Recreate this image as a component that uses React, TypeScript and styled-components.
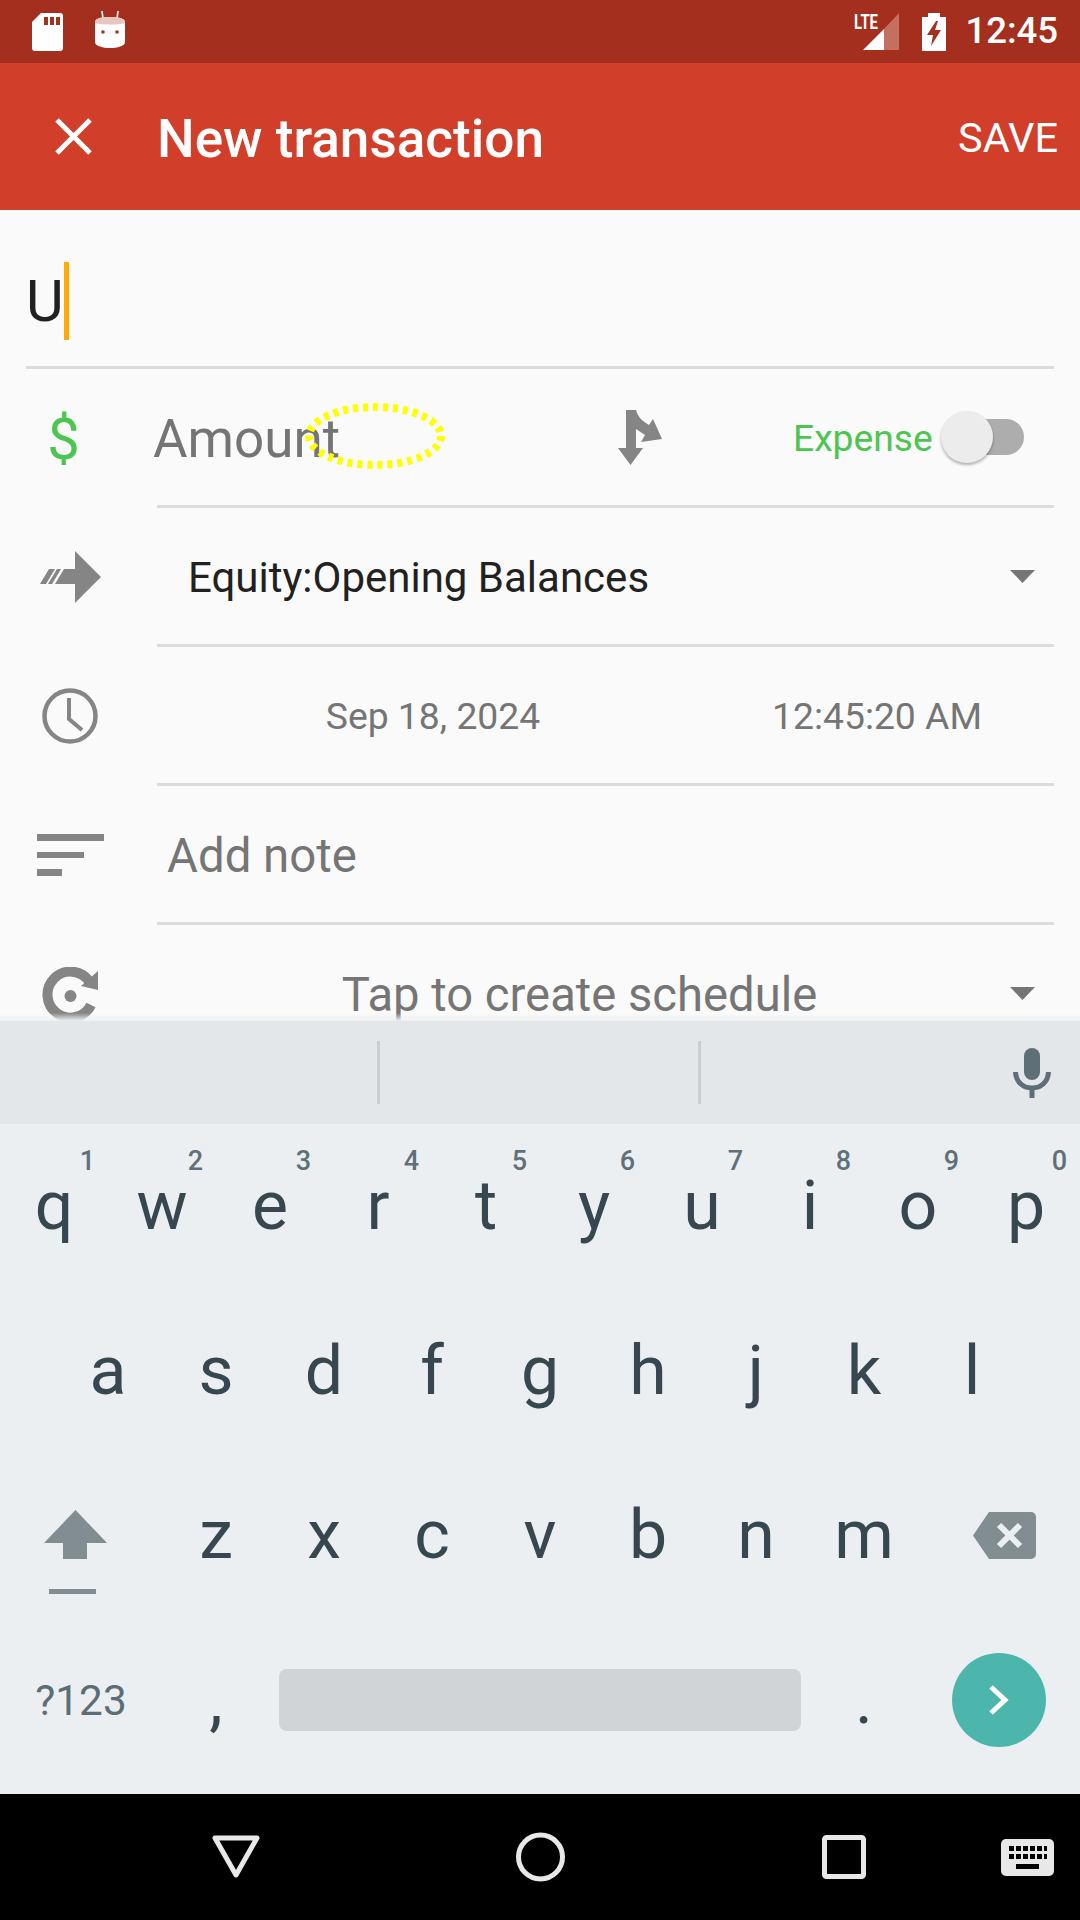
import React from "react";
import styled, { createGlobalStyle } from "styled-components";

const Global = createGlobalStyle`
  html, body { margin: 0; padding: 0; background: #000; }
  body { font-family: Roboto, "Liberation Sans", sans-serif; }
  * { box-sizing: border-box; }
`;

const Page = styled.div`
  position: relative;
  width: 1080px;
  height: 1920px;
  display: flex;
  flex-direction: column;
  overflow: hidden;
  background: #fafafa;
`;

const StatusBar = styled.div`
  height: 63px;
  flex: none;
  background: #a52f1e;
  display: flex;
  align-items: center;
  padding: 0 22px 0 32px;
  color: #fff;
`;
const StatusLeft = styled.div`
  display: flex;
  align-items: center;
  gap: 32px;
  flex: 1;
`;
const StatusRight = styled.div`
  display: flex;
  align-items: center;
`;
const BugIcon = styled.svg`
  margin-bottom: 5px;
`;
const SignalIcon = styled.svg`
  margin-right: 23px;
  margin-top: -10px;
`;
const BatteryIcon = styled.svg`
  margin-right: 19px;
`;
const Clock = styled.span`
  font-size: 36.5px;
  font-weight: 500;
  line-height: 1;
`;

const AppBar = styled.div`
  height: 147px;
  flex: none;
  background: #d13e29;
  display: flex;
  align-items: center;
  color: #fff;
  padding-right: 22px;
`;
const CloseSlot = styled.div`
  width: 157px;
  flex: none;
  padding-left: 55px;
  display: flex;
`;
const Title = styled.div`
  flex: 1;
  font-size: 53.1px;
  font-weight: 500;
  margin-top: 4px;
`;
const Save = styled.div`
  font-size: 41.5px;
  margin-top: 2px;
`;

const Form = styled.div`
  position: relative;
  height: 811px;
  flex: none;
  overflow: hidden;
  background: #fafafa;
`;
const FormShade = styled.div`
  position: absolute;
  left: 0;
  right: 0;
  bottom: 0;
  height: 8px;
  background: linear-gradient(to bottom, rgba(235, 237, 238, 0), #f0f1f2);
`;
const TitleField = styled.div`
  height: 159px;
  margin: 0 26px;
  padding-top: 26px;
  border-bottom: 3px solid #dcdcdc;
  display: flex;
  align-items: center;
  font-size: 58px;
  color: #212121;
`;
const Caret = styled.span`
  width: 5px;
  height: 78px;
  background: #ffab00;
`;

const Row = styled.div`
  height: 139px;
  display: flex;
`;
const IconSlot = styled.div<{ $shift?: number; $lift?: number }>`
  width: 140px;
  margin-right: 17px;
  flex: none;
  display: flex;
  align-items: center;
  justify-content: center;
  padding-right: ${(p) => p.$shift ?? 0}px;
  padding-bottom: ${(p) => p.$lift ?? 0}px;
`;
const Dollar = styled.span`
  font-size: 58px;
  color: #4cc552;
  line-height: 1;
`;
const Body = styled.div<{ $inset?: number }>`
  flex: 1;
  margin-right: 26px;
  border-bottom: 3px solid #dcdcdc;
  display: flex;
  align-items: center;
  padding-left: ${(p) => p.$inset ?? 0}px;
  min-width: 0;
`;
const BodyGrid = styled(Body)`
  display: grid;
  grid-template-columns: 552px 336px;
  justify-items: center;
`;
const Placeholder = styled.span<{ $size: number; $drop?: number }>`
  font-size: ${(p) => p.$size}px;
  color: #757575;
  margin-top: ${(p) => p.$drop ?? 3}px;
`;
const AmountText = styled(Placeholder)`
  width: 465px;
  margin-left: -4px;
  flex: none;
`;
const ExpenseLabel = styled.span`
  margin-left: 131px;
  font-size: 37.2px;
  color: #4cc552;
  margin-top: 2px;
`;
const Toggle = styled.div`
  position: relative;
  width: 83px;
  height: 52px;
  margin-left: 8px;
  display: flex;
  align-items: center;
  justify-content: flex-end;
`;
const Track = styled.div`
  width: 77px;
  height: 36px;
  border-radius: 18px;
  background: #adadad;
`;
const Thumb = styled.div`
  position: absolute;
  left: 0;
  top: 0;
  width: 52px;
  height: 52px;
  border-radius: 50%;
  background: #ececec;
  box-shadow: 0 2px 3px rgba(0, 0, 0, 0.3);
`;
const AccountText = styled.span`
  flex: 1;
  font-size: 42px;
  color: #212121;
  margin-top: 2px;
`;
const ScheduleText = styled(Placeholder)`
  width: 845px;
  flex: none;
  text-align: center;
`;
const Dropdown = styled.svg`
  flex: none;
  margin-left: auto;
  margin-right: 19px;
`;
const Highlight = styled.svg`
  position: absolute;
  left: 303px;
  top: 401px;
`;

const Keyboard = styled.div`
  flex: 1;
  display: flex;
  flex-direction: column;
  background: #eceff2;
`;
const Suggestions = styled.div`
  height: 103px;
  flex: none;
  background: #e3e7ea;
  display: grid;
  grid-template-columns: 380px 321px 1fr;
  align-items: center;
`;
const Suggestion = styled.div<{ $line?: boolean }>`
  height: 63px;
  display: flex;
  align-items: center;
  justify-content: flex-end;
  border-right: ${(p) => (p.$line ? "3px solid #c9ced2" : "none")};
  padding-right: ${(p) => (p.$line ? 0 : 29)}px;
`;
const KeyRows = styled.div`
  flex: 1;
  display: grid;
  grid-auto-rows: 164.5px;
  padding-bottom: 12px;
`;
const KeyRow = styled.div<{ $pad?: number }>`
  display: flex;
  align-items: center;
  padding-left: ${(p) => p.$pad ?? 0}px;
`;
const Key = styled.div`
  position: relative;
  width: 108px;
  height: 100%;
  flex: none;
  display: flex;
  align-items: center;
  justify-content: center;
  font-size: 68px;
  color: #37474f;
`;
const Hint = styled.span`
  position: absolute;
  top: 21px;
  right: 13px;
  font-size: 27px;
  font-weight: 500;
  line-height: 32px;
  color: #607079;
`;
const WideKey = styled.div`
  width: 162px;
  flex: none;
  display: flex;
  align-items: center;
  justify-content: center;
  padding-left: 10px;
`;
const ShiftKey = styled.div`
  width: 162px;
  flex: none;
  display: flex;
  align-items: center;
  justify-content: center;
  padding-right: 11px;
  margin-top: 34px;
`;
const SymbolsKey = styled.div`
  width: 162px;
  flex: none;
  text-align: center;
  font-size: 42.3px;
  color: #5d6d75;
  margin-top: 2px;
`;
const SpaceBar = styled.div`
  width: 522px;
  height: 62px;
  flex: none;
  border-radius: 8px;
  margin: 0 9px;
  background: #d0d4d7;
`;
const EnterKey = styled.div`
  width: 94px;
  height: 94px;
  margin-left: 34px;
  flex: none;
  border-radius: 50%;
  background: #4db6ac;
  display: flex;
  align-items: center;
  justify-content: center;
`;

const NavBar = styled.div`
  height: 126px;
  flex: none;
  background: #000;
  display: flex;
  align-items: center;
`;
const NavBack = styled.svg`
  margin-left: 212px;
`;
const NavHome = styled.svg`
  margin-left: 256px;
`;
const NavRecent = styled.svg`
  margin-left: 257px;
`;
const NavKeyboard = styled.svg`
  margin-left: 135px;
`;

const ICON = "#858585";

const rows = ["qwertyuiop", "asdfghjkl", "zxcvbnm"];

export default function App() {
  return (
    <Page>
      <Global />
      <StatusBar>
        <StatusLeft>
          <svg width="31" height="38" viewBox="0 0 31 38">
            <path
              d="M9 0H28a3 3 0 0 1 3 3V35a3 3 0 0 1-3 3H3a3 3 0 0 1-3-3V9Z"
              fill="#fff"
            />
            <path d="M12 4h4v8h-4zM18 4h4v8h-4zM24 4h4v8h-4z" fill="#a52f1e" />
          </svg>
          <BugIcon width="30" height="37" viewBox="0 0 30 37">
            <path d="M7 0l1 8M23 0l-1 8" stroke="#fff" strokeWidth="1.6" />
            <path
              d="M0 11C0 7 8 6 15 6s15 1 15 5V31c0 4-8 6-15 6S0 35 0 31Z"
              fill="#fff"
            />
            <path
              d="M0 11C0 7 8 6 15 6s15 1 15 5v1c-8 2-22 2-30 0Z"
              fill="#e8c6be"
            />
            <circle cx="8" cy="21" r="1.8" fill="#a52f1e" />
            <circle cx="22" cy="21" r="1.8" fill="#a52f1e" />
          </BugIcon>
        </StatusLeft>
        <StatusRight>
          <SignalIcon width="45" height="47" viewBox="0 -10 45 47">
            <polygon points="9,37 30,16 30,37" fill="#fff" />
            <polygon points="30,16 45,0 45,37 30,37" fill="#c4705f" />
            <text
              x="0"
              y="16"
              fontFamily="Roboto, sans-serif"
              fontWeight="700"
              fontSize="20"
              fill="#fff"
              textLength="24"
              lengthAdjust="spacingAndGlyphs"
            >
              LTE
            </text>
          </SignalIcon>
          <BatteryIcon width="24" height="38" viewBox="0 0 24 38">
            <path d="M6 0h12v4h6v34H0V4h6Z" fill="#fff" />
            <path d="M14 8L5 22h6l-2 11 10-16h-6l3-9Z" fill="#a52f1e" />
          </BatteryIcon>
          <Clock>12:45</Clock>
        </StatusRight>
      </StatusBar>

      <AppBar>
        <CloseSlot>
          <svg width="37" height="37" viewBox="0 0 37 37">
            <path d="M2 2L35 35M35 2L2 35" stroke="#fff" strokeWidth="5" />
          </svg>
        </CloseSlot>
        <Title>New transaction</Title>
        <Save>SAVE</Save>
      </AppBar>

      <Form>
        <TitleField>
          U<Caret />
        </TitleField>

        <Row>
          <IconSlot $shift={13}>
            <Dollar>$</Dollar>
          </IconSlot>
          <Body>
            <AmountText $size={53}>Amount</AmountText>
            <svg width="44" height="55" viewBox="0 0 44 55">
              <path
                d="M8 0H18C20 8 26 12 31 15L35 9L44 29L23 32L27 25C24 23 21 21 18 19V38H25L12.5 55L0 38H8Z"
                fill={ICON}
              />
            </svg>
            <ExpenseLabel>Expense</ExpenseLabel>
            <Toggle>
              <Track />
              <Thumb />
            </Toggle>
          </Body>
        </Row>

        <Row>
          <IconSlot $lift={2}>
            <svg width="61" height="52" viewBox="0 0 61 52">
              <path
                d="M35 0L61 26L35 52V33H15L24 18H35Z M0 33L9 18H15L6 33Z"
                fill={ICON}
              />
              <path d="M8 33L17 18H21L12 33Z" fill={ICON} />
            </svg>
          </IconSlot>
          <Body $inset={31}>
            <AccountText>Equity:Opening Balances</AccountText>
            <Dropdown width="25" height="13" viewBox="0 0 25 13">
              <polygon points="0,0 25,0 12.5,13" fill="#757575" />
            </Dropdown>
          </Body>
        </Row>

        <Row>
          <IconSlot $lift={2}>
            <svg width="56" height="56" viewBox="0 0 56 56">
              <circle cx="28" cy="28" r="25.5" fill="none" stroke={ICON} strokeWidth="4.5" />
              <path d="M27 10V31L40 42" fill="none" stroke={ICON} strokeWidth="4" />
            </svg>
          </IconSlot>
          <BodyGrid>
            <Placeholder $size={37.3} $drop={2}>Sep 18, 2024</Placeholder>
            <Placeholder $size={37.3} $drop={2}>12:45:20 AM</Placeholder>
          </BodyGrid>
        </Row>

        <Row>
          <IconSlot $lift={2}>
            <svg width="67" height="42" viewBox="0 0 67 42">
              <path d="M0 0H67V7H0ZM0 18H47V24H0ZM0 35H25V42H0Z" fill={ICON} />
            </svg>
          </IconSlot>
          <Body $inset={10}>
            <Placeholder $size={47.4}>Add note</Placeholder>
          </Body>
        </Row>

        <Row>
          <IconSlot>
            <svg width="56" height="56" viewBox="0 0 56 56">
              <path
                d="M47 14A23 23 0 1 0 49 38"
                fill="none"
                stroke={ICON}
                strokeWidth="10"
              />
              <polygon points="56,4 56,23 39,19" fill={ICON} />
              <circle cx="28.5" cy="29" r="6" fill={ICON} />
            </svg>
          </IconSlot>
          <Body>
            <ScheduleText $size={47.2}>Tap to create schedule</ScheduleText>
            <Dropdown width="25" height="13" viewBox="0 0 25 13">
              <polygon points="0,0 25,0 12.5,13" fill="#757575" />
            </Dropdown>
          </Body>
        </Row>
        <FormShade />
      </Form>

      <Keyboard>
        <Suggestions>
          <Suggestion $line />
          <Suggestion $line />
          <Suggestion>
            <svg width="38" height="50" viewBox="0 0 38 50">
              <rect x="11" y="0" width="16" height="32" rx="8" fill="#5f6f78" />
              <path
                d="M2.5 24C3 34 10 40 19 40C28 40 35 34 35.5 24"
                fill="none"
                stroke="#5f6f78"
                strokeWidth="5"
              />
              <rect x="16.500" y="39" width="5" height="11" fill="#5f6f78" />
            </svg>
          </Suggestion>
        </Suggestions>
        <KeyRows>
          <KeyRow>
            {rows[0].split("").map((c, i) => (
              <Key key={c}>
                {c}
                <Hint>{(i + 1) % 10}</Hint>
              </Key>
            ))}
          </KeyRow>
          <KeyRow $pad={54}>
            {rows[1].split("").map((c) => (
              <Key key={c}>{c}</Key>
            ))}
          </KeyRow>
          <KeyRow>
            <ShiftKey>
              <svg width="63" height="84" viewBox="0 0 63 84">
                <path d="M31.500 0L63 33H43V49H19V33H0Z" fill="#828d91" />
                <rect x="5" y="79" width="47" height="5" fill="#828d91" />
              </svg>
            </ShiftKey>
            {rows[2].split("").map((c) => (
              <Key key={c}>{c}</Key>
            ))}
            <WideKey>
              <svg width="63" height="47" viewBox="0 0 63 47">
                <path
                  d="M16 0H58a5 5 0 0 1 5 5V42a5 5 0 0 1-5 5H16L0 23.500Z"
                  fill="#828d91"
                />
                <path d="M26 13L47 34M47 13L26 34" stroke="#eceff2" strokeWidth="6" />
              </svg>
            </WideKey>
          </KeyRow>
          <KeyRow>
            <SymbolsKey>?123</SymbolsKey>
            <Key>,</Key>
            <SpaceBar />
            <Key>.</Key>
            <EnterKey>
              <svg width="20" height="30" viewBox="0 0 20 30">
                <path d="M2 2L16 15L2 28" fill="none" stroke="#fff" strokeWidth="5" />
              </svg>
            </EnterKey>
          </KeyRow>
        </KeyRows>
      </Keyboard>

      <NavBar>
        <NavBack width="48" height="44" viewBox="0 0 48 44">
          <path
            d="M3 3H45L24 40Z"
            fill="none"
            stroke="#e8e8e8"
            strokeWidth="5"
            strokeLinejoin="round"
          />
        </NavBack>
        <NavHome width="49" height="50" viewBox="0 0 49 50">
          <circle cx="24.500" cy="25" r="22" fill="none" stroke="#e8e8e8" strokeWidth="5" />
        </NavHome>
        <NavRecent width="44" height="44" viewBox="0 0 44 44">
          <rect
            x="2.500"
            y="2.500"
            width="39"
            height="39"
            rx="2"
            fill="none"
            stroke="#e8e8e8"
            strokeWidth="5"
          />
        </NavRecent>
        <NavKeyboard width="53" height="37" viewBox="0 0 53 37">
          <rect width="53" height="37" rx="5" fill="#e8e8e8" />
          <path
            d="M8 7h5v5H8zM15 7h5v5h-5zM22 7h5v5h-5zM29 7h5v5h-5zM36 7h5v5h-5zM43 7h3v5h-3zM8 15h5v5H8zM15 15h5v5h-5zM22 15h5v5h-5zM29 15h5v5h-5zM36 15h5v5h-5zM43 15h3v5h-3zM15 25h23v5H15z"
            fill="#000"
          />
        </NavKeyboard>
      </NavBar>

      <Highlight width="144" height="70" viewBox="0 0 144 70">
        <ellipse
          cx="72"
          cy="35"
          rx="66"
          ry="29"
          fill="none"
          stroke="#ffff00"
          strokeWidth="8"
          strokeDasharray="5 5"
        />
      </Highlight>
    </Page>
  );
}
